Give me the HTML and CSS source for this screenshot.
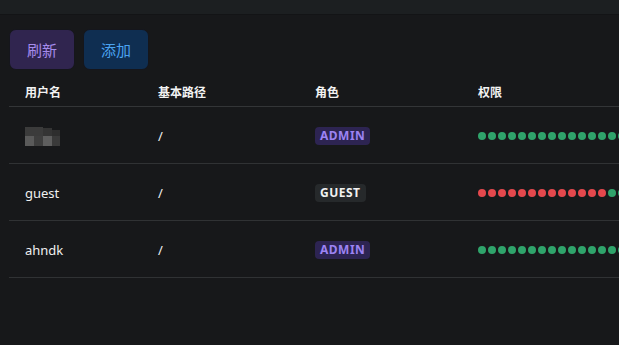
FILE: index.html
```html
<!DOCTYPE html>
<html lang="zh-CN">
<head>
  <meta charset="UTF-8" />
  <title>用户</title>
  <link rel="stylesheet" href="styles.css">
</head>
<body>
  <div class="topbar"></div>
  <div class="content">
    <div class="actions">
      <button class="btn btn-purple">刷新</button>
      <button class="btn btn-blue">添加</button>
    </div>

    <table class="users">
      <thead>
        <tr>
          <th class="c-name">用户名</th>
          <th class="c-path">基本路径</th>
          <th class="c-role">角色</th>
          <th class="c-perm">权限</th>
        </tr>
      </thead>
      <tbody>
        <tr>
          <td>
            <div class="blurred">
              <span class="px p1"></span><span class="px p2"></span><span class="px p3"></span><span class="px p4"></span>
              <span class="px p5"></span><span class="px p6"></span><span class="px p7"></span><span class="px p8"></span>
            </div>
          </td>
          <td>/</td>
          <td><span class="badge admin">ADMIN</span></td>
          <td><div class="dots" data-red="0"></div></td>
        </tr>
        <tr>
          <td>guest</td>
          <td>/</td>
          <td><span class="badge guest">GUEST</span></td>
          <td><div class="dots" data-red="13"></div></td>
        </tr>
        <tr>
          <td>ahndk</td>
          <td>/</td>
          <td><span class="badge admin">ADMIN</span></td>
          <td><div class="dots" data-red="0"></div></td>
        </tr>
      </tbody>
    </table>
  </div>

  <script>
    // fill permission dots
    document.querySelectorAll(".dots").forEach(function (box) {
      var red = parseInt(box.getAttribute("data-red"), 10);
      for (var i = 0; i < 16; i++) {
        var d = document.createElement("span");
        d.className = i < red ? "dot off" : "dot on";
        box.appendChild(d);
      }
    });
  </script>
</body>
</html>
```

FILE: styles.css
```css
* {
  margin: 0;
  padding: 0;
  box-sizing: border-box;
}

body {
  background: #17181a;
  color: #e8e8e8;
  font-family: "Noto Sans", "Noto Sans CJK SC", sans-serif;
  width: 619px;
  height: 345px;
  overflow: hidden;
}

.topbar {
  height: 15px;
  background: #1c1f21;
  border-bottom: 1px solid #131416;
}

.content {
  padding: 14px 0 0 9px;
}

.actions {
  display: flex;
  gap: 8px;
}

.btn {
  width: 66px;
  height: 41px;
  border-radius: 7px;
  border: 1px solid #15161c;
  font-family: "Noto Sans CJK SC", sans-serif;
  font-size: 15px;
  cursor: pointer;
}

.btn-purple {
  background: #30254f;
  color: #a58bec;
}

.btn-blue {
  background: #0f2e51;
  color: #4aa3f0;
}

.users {
  margin-top: 8px;
  border-collapse: collapse;
  width: 610px;
  table-layout: fixed;
}

.users th {
  text-align: left;
  font-family: "Noto Sans CJK SC", sans-serif;
  font-size: 12px;
  font-weight: 700;
  color: #f2f2f2;
  height: 28px;
  padding: 0 16px;
  border-bottom: 1px solid #333537;
}

.c-name { width: 133px; }
.c-path { width: 157px; }
.c-role { width: 163px; }

.users td {
  height: 57px;
  padding: 2px 16px 0;
  font-size: 13px;
  color: #f0f0f0;
  border-bottom: 1px solid #303234;
  vertical-align: middle;
}

.users td:last-child {
  padding-right: 0;
}

.blurred {
  display: grid;
  grid-template-columns: 9px 9px 9px 8px;
  grid-template-rows: 9px 10px;
  margin-top: 2px;
}

.px { display: block; }
.p1 { background: #3b3b3b; }
.p2 { background: #3b3b3b; }
.p3 { background: #343434; margin-top: 1px; }
.p4 { background: #2e2e2e; margin-top: 3px; }
.p5 { background: #5a5a5a; }
.p6 { background: #3e3e3e; }
.p7 { background: #5e5e5e; }
.p8 { background: #3a3a3a; }

.badge {
  display: inline-block;
  height: 18px;
  line-height: 18px;
  padding: 0 5px;
  border-radius: 4px;
  font-size: 12px;
  font-weight: 700;
  letter-spacing: 0.5px;
}

.badge.admin {
  background: #2d2452;
  color: #9c83f2;
}

.badge.guest {
  background: #26292b;
  color: #f2f2f2;
}

.dots {
  display: flex;
  gap: 2px;
  overflow: hidden;
}

.dot {
  width: 8px;
  height: 8px;
  border-radius: 50%;
  flex: none;
}

.dot.on { background: #2fa46b; }
.dot.off { background: #e5484d; }
```
